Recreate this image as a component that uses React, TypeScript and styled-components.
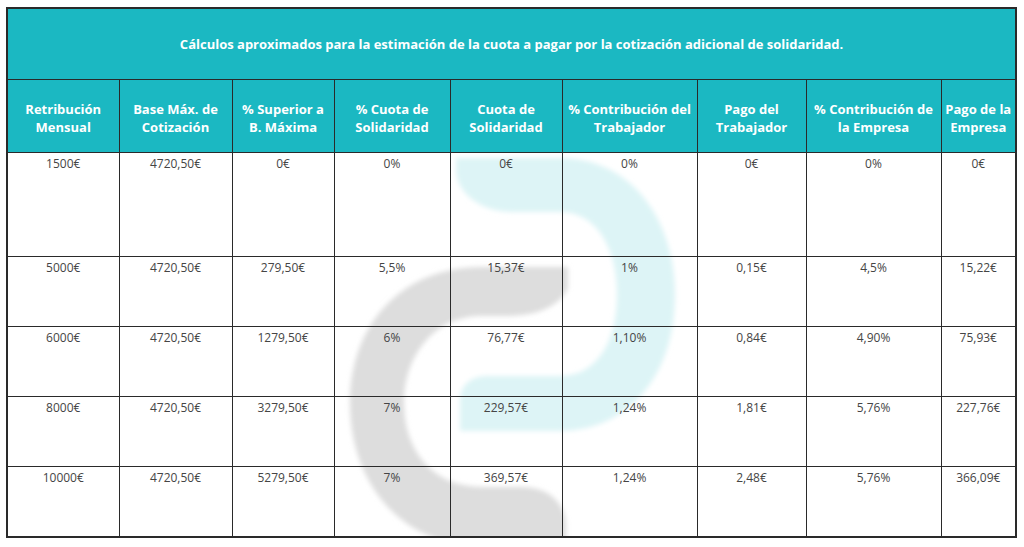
import React from "react";
import styled, { createGlobalStyle } from "styled-components";

const GlobalStyle = createGlobalStyle`
  html, body {
    margin: 0;
    padding: 0;
    background: #ffffff;
  }
  body {
    font-family: "Open Sans", "Noto Sans", sans-serif;
  }
`;

const Page = styled.div`
  width: 1024px;
  height: 547px;
  padding: 7px 0 0 6px;
  box-sizing: border-box;
  overflow: hidden;
`;

const Wrapper = styled.div`
  position: relative;
  width: 1009px;
`;

const WatermarkClip = styled.div`
  position: absolute;
  inset: 0;
  overflow: hidden;
  z-index: 0;
  pointer-events: none;
`;

const Watermark = styled.svg`
  position: absolute;
  left: -6px;
  top: -7px;
  width: 1024px;
  height: 547px;
`;

const Table = styled.table`
  position: relative;
  z-index: 1;
  width: 1009px;
  border-collapse: collapse;
  table-layout: fixed;
  border: 2px solid #2a2a2a;
`;

const Col = styled.col<{ $w: number }>`
  width: ${(p) => p.$w}px;
`;

const TitleCell = styled.th`
  background: #1bb8c2;
  color: #ffffff;
  height: 70px;
  padding: 0;
  font-size: 13px;
  font-weight: 700;
  text-align: center;
  vertical-align: middle;
  border: 1.5px solid #2a2a2a;
`;

const HeadCell = styled.th`
  background: #1bb8c2;
  color: #ffffff;
  height: 68px;
  padding: 4px 2px 0;
  font-size: 13px;
  font-weight: 700;
  line-height: 18px;
  text-align: center;
  vertical-align: middle;
  border: 1.5px solid #2a2a2a;
`;

const Row = styled.tr<{ $h: number }>`
  height: ${(p) => p.$h}px;
`;

const Cell = styled.td`
  background: transparent;
  color: #454545;
  padding: 3px 2px 0;
  font-size: 12px;
  line-height: 16px;
  text-align: center;
  vertical-align: top;
  border: 1.5px solid #2a2a2a;
`;

const widths = [112, 113, 102, 116, 112, 135, 109, 135, 75];

const headers = [
  ["Retribución", "Mensual"],
  ["Base Máx. de", "Cotización"],
  ["% Superior a", "B. Máxima"],
  ["% Cuota de", "Solidaridad"],
  ["Cuota de", "Solidaridad"],
  ["% Contribución del", "Trabajador"],
  ["Pago del", "Trabajador"],
  ["% Contribución de", "la Empresa"],
  ["Pago de la", "Empresa"],
];

const rows = [
  { h: 104, cells: ["1500€", "4720,50€", "0€", "0%", "0€", "0%", "0€", "0%", "0€"] },
  { h: 70, cells: ["5000€", "4720,50€", "279,50€", "5,5%", "15,37€", "1%", "0,15€", "4,5%", "15,22€"] },
  { h: 70, cells: ["6000€", "4720,50€", "1279,50€", "6%", "76,77€", "1,10%", "0,84€", "4,90%", "75,93€"] },
  { h: 70, cells: ["8000€", "4720,50€", "3279,50€", "7%", "229,57€", "1,24%", "1,81€", "5,76%", "227,76€"] },
  { h: 70, cells: ["10000€", "4720,50€", "5279,50€", "7%", "369,57€", "1,24%", "2,48€", "5,76%", "366,09€"] },
];

const Logo: React.FC = () => (
  <WatermarkClip>
    <Watermark viewBox="0 0 1024 547">
      <defs>
        <filter id="soft" x="-10%" y="-10%" width="120%" height="120%">
          <feGaussianBlur stdDeviation="2.5" />
        </filter>
      </defs>
      <g filter="url(#soft)">
        <path
          fill="#ddf4f6"
          d="M 456 158 L 560 158 C 628 158 675 215 675 295 C 675 378 626 431 560 431 L 460 431 L 460 400 C 460 386 470 376 488 376 L 560 376 C 598 376 617 340 617 295 C 617 250 598 212 560 212 L 512 212 C 480 212 456 192 456 170 Z"
        />
        <path
          fill="#dddddd"
          d="M 568 267 L 568 288 C 560 306 538 316 505 316 L 482 316 C 432 316 404 358 404 403 C 404 450 432 487 482 487 L 522 487 C 550 487 566 505 566 525 L 566 546 L 482 546 C 400 546 350 482 350 403 C 350 326 400 267 482 267 Z"
        />
      </g>
    </Watermark>
  </WatermarkClip>
);

const App: React.FC = () => {
  return (
    <>
      <GlobalStyle />
      <Page>
        <Wrapper>
          <Logo />
          <Table>
            <colgroup>
              {widths.map((w, i) => (
                <Col key={i} $w={w} />
              ))}
            </colgroup>
            <thead>
              <tr>
                <TitleCell colSpan={9}>
                  Cálculos aproximados para la estimación de la cuota a pagar por la cotización adicional de solidaridad.
                </TitleCell>
              </tr>
              <tr>
                {headers.map((h, i) => (
                  <HeadCell key={i}>
                    {h[0]}
                    <br />
                    {h[1]}
                  </HeadCell>
                ))}
              </tr>
            </thead>
            <tbody>
              {rows.map((row, r) => (
                <Row key={r} $h={row.h}>
                  {row.cells.map((c, i) => (
                    <Cell key={i}>{c}</Cell>
                  ))}
                </Row>
              ))}
            </tbody>
          </Table>
        </Wrapper>
      </Page>
    </>
  );
};

export default App;
